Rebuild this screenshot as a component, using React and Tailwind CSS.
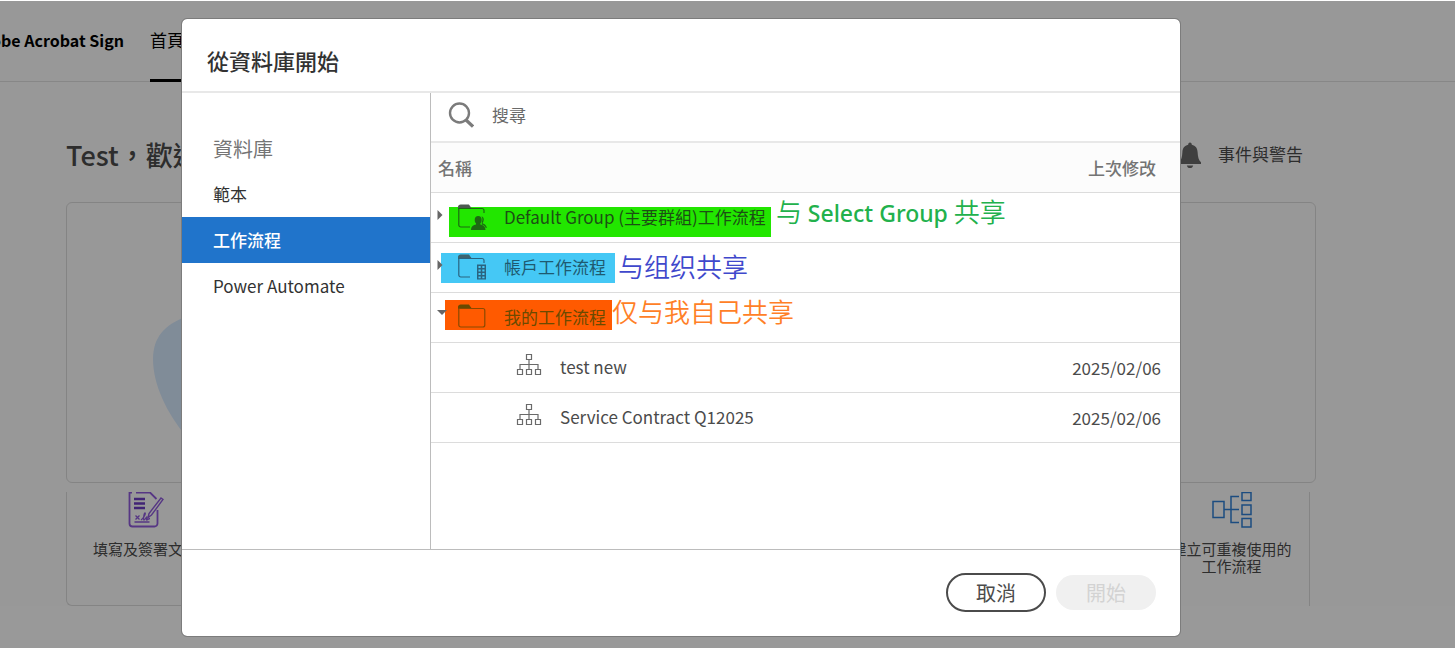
import React from "react";

const FONT = "font-['Noto_Sans_CJK_TC','Noto_Sans',sans-serif]";

function BellIcon() {
  return (
    <svg width="24" height="28" viewBox="0 0 24 28" fill="#6a6a6a" aria-hidden="true">
      <path d="M12 0.5c1.2 0 1.8 1 1.8 2.2 3.8.8 5.6 3.4 5.8 7.3.3 5 1 8 3.4 10.300V22H1v-1.700C3.400 18 4.100 15 4.400 10c.2-3.900 2-6.500 5.800-7.300C10.200 1.500 10.800.5 12 .5zM8.800 23.500h6.400c-.4 1.600-1.500 2.600-3.200 2.600s-2.800-1-3.200-2.600z" />
    </svg>
  );
}

function SignIcon() {
  return (
    <svg width="36" height="36" viewBox="0 0 36 36" fill="none" stroke="#8f5bdc" strokeWidth="1.800" aria-hidden="true">
      <path d="M3 0.500h-1.500V31.500a3 3 0 0 0 3 3h22a3 3 0 0 0 3-3V18M1.500 0.500H4M8 0.500H22l6.500 6.500" />
      <path d="M6 7h11M6 11.500h11M6 16h11" stroke="#6d3cc4" strokeWidth="2.600" />
      <path d="M33 6l2 1.500L23.500 23l-3.500 2.500 1-4z" strokeWidth="1.400" />
      <path d="M7.500 23.500l4 4M11.500 23.500l-4 4M13 28c3-2 5-7 4-7s-2 7-1 7 3-4 3-3-1 3 0 3 1.500-1.500 3-1.500M6.500 30h15" strokeWidth="1.300" />
    </svg>
  );
}

function WorkflowIcon() {
  return (
    <svg width="40" height="36" viewBox="0 0 40 36" fill="none" stroke="#2f7fd6" strokeWidth="1.500" aria-hidden="true">
      <path d="M1 9.500h11v16H1zM30 0.500h9v8h-9zM30 13h9v9.500h-9zM30 26.500h9V35h-9zM12 17.500h15M27 4.500h-8v26h8" />
    </svg>
  );
}

function Folder({ kind, color, tab }) {
  return (
    <svg className="block" width="30" height="28" viewBox="0 0 30 28" fill="none" stroke={color} strokeWidth="1.200" aria-hidden="true">
      <path d="M.6 4.500V3A2 2 0 0 1 2.600 1h8l2.400 3.500z" fill={tab} stroke={tab} />
      {kind === "mine" && <path d="M.8 4.500h24a2 2 0 0 1 2 2v14.500a2 2 0 0 1-2 2h-22a2 2 0 0 1-2-2z" />}
      {kind !== "mine" && <path d="M26 9V6.500a2 2 0 0 0-2-2H.8V21a2 2 0 0 0 2 2H12" />}
      {kind === "group" && (
        <g stroke="none" fill={color}>
          <path d="M20.200 12c2.200 0 3.500 1.700 3.500 3.900 0 1.400-.6 2.700-1.300 3.400v1.200c2.600.7 4.900 1.600 5.100 5.500H13c.2-3.900 2.400-4.800 5-5.500v-1.200c-.8-.7-1.300-2-1.300-3.400 0-2.200 1.300-3.900 3.500-3.900z" />
          <path d="M23.500 12.500c1.500.2 2.300 1.500 2.300 3.100 0 1.200-.4 2.200-1 2.900v1c2 .6 3.700 1.600 4 4.600h-1c-.7-2.200-2.200-3.100-4-3.700v-2.500c.8-1.500.9-3.800-.3-5.400z" />
        </g>
      )}
      {kind === "account" && (
        <g>
          <path d="M19 10.500h9v15h-9z" fill={color} stroke="none" />
          <path d="M20.500 13h2.200M24.300 13h2.200M20.500 16.500h2.200M24.300 16.500h2.200M20.500 20h2.200M24.300 20h2.200M20.500 23.300h2.200M24.300 23.300h2.200" strokeWidth="1.800" stroke="#45c8f5" />
        </g>
      )}
    </svg>
  );
}

function NodeIcon() {
  return (
    <svg className="block" width="26" height="24" viewBox="0 0 26 24" fill="none" stroke="#6a6a6a" strokeWidth="1.200" aria-hidden="true">
      <path d="M10.500 1.500h5v5h-5zM1.500 16.500h5v5h-5zM10.500 16.500h5v5h-5zM19.500 16.500h5v5h-5zM13 6.500v10M4 16.500v-5h18v5" />
    </svg>
  );
}

function Caret({ open }) {
  return (
    <svg width="10" height="10" viewBox="0 0 10 10" fill="#666" aria-hidden="true">
      <path d={open ? "M0 0h10L5 5z" : "M0.500 0v10l5-5z"} />
    </svg>
  );
}

const groups = [
  { kind: "group", label: "Default Group (主要群組)工作流程", text: "text-[#1c4f14]", color: "#1d6a12", tab: "#4d5a50",
    mark: "left-[18px] top-[14px] w-[322px] bg-[#22e600]", note: "left-[345px] top-0 text-[#22b14c]",
    noteText: <>与 <span className="font-['Noto_Sans',sans-serif] text-[23px] font-medium">Select Group</span> 共享</> },
  { kind: "account", label: "帳戶工作流程", text: "text-[#1f5a70]", color: "#2b6480", tab: "#3c6470",
    mark: "left-[10px] top-[10px] w-[174px] bg-[#45c8f5]", note: "left-[187px] top-[5px] text-[#3f48cc]",
    noteText: "与组织共享" },
  { kind: "mine", label: "我的工作流程", text: "text-[#6b4a00]", color: "#8a4a00", tab: "#6b4a00", open: true,
    mark: "left-[14px] top-[7px] w-[167px] bg-[#ff5a00]", note: "left-[181px] top-0 text-[#ff7f27]",
    noteText: "仅与我自己共享" },
];

const files = [
  { name: "test new", date: "2025/02/06" },
  { name: "Service Contract Q12025", date: "2025/02/06" },
];

function Page() {
  return (
    <div className="min-h-screen bg-white pt-px">
      <div className="bg-[#fefefe]">
        <header className="flex h-[81px] border-b border-[#e1e1e1]">
          <div className="flex w-[124px] justify-end overflow-hidden">
            <span className="pt-[26px] text-[16px] leading-[26px] font-bold whitespace-nowrap text-black">Adobe Acrobat Sign</span>
          </div>
          <nav className="ml-[26px]">
            <a href="#home" className="block h-[81px] border-b-[3px] border-black pt-[26px] text-[17px] leading-[26px] text-black">首頁</a>
          </nav>
        </header>
        <main className="mr-[139px] ml-[66px]">
          <div className="flex items-start justify-between pt-[51px] pr-[13px]">
            <h1 className="pb-[25px] text-[27px] leading-[44px] font-medium text-[#4b4b4b]">Test，歡迎使用</h1>
            <a href="#alerts" className="flex items-center gap-4 pt-[8px] text-[17px] leading-[26px] text-[#4b4b4b]">
              <BellIcon />
              <span className="pb-[4px]">事件與警告</span>
            </a>
          </div>
          <section className="rounded-md border border-[#dcdcdc] pt-[110px] pb-[47px] pl-[86px]">
            <svg width="150" height="122" viewBox="0 0 150 122" className="block" aria-hidden="true">
              <path d="M32 4C12 12 0 24 0 46c0 26 14 54 32 76h90V4z" fill="#d6e9fd" />
            </svg>
          </section>
          <div className="mt-[9px] mr-[6px] flex h-[114px] justify-between">
            <a href="#fill" className="flex w-[158px] flex-col items-center rounded-bl-md border-b border-l border-[#dcdcdc] text-[15px] leading-[17px] text-[#4b4b4b]">
              <SignIcon />
              <span className="pt-[12px] whitespace-nowrap">填寫及簽署文件</span>
            </a>
            <a href="#create" className="flex w-[156px] flex-col items-center border-r border-[#dcdcdc] text-center text-[15px] leading-[17px] text-[#4b4b4b]">
              <WorkflowIcon />
              <span className="pt-[12px]">建立可重複使用的<br />工作流程</span>
            </a>
          </div>
        </main>
      </div>
    </div>
  );
}

function Dialog() {
  return (
    <div role="dialog" aria-labelledby="dialog-title" className="w-full overflow-hidden rounded-[5px] bg-white text-[#4b4b4b] outline outline-[#7c7c7c]">
      <div className="border-b-2 border-[#e8e8e8] px-[25px] pt-[25px] pb-[15px]">
        <h2 id="dialog-title" className="text-[22px] leading-[32px] font-medium text-[#323232]">從資料庫開始</h2>
      </div>
      <div className="flex border-b border-[#bcbcbc]">
        <nav className="flex w-[249px] shrink-0 flex-col border-r border-[#bcbcbc] pt-[34px] text-[17px] text-[#323232]">
          <h3 className="pl-[31px] text-[20px] leading-[44px] text-[#747474]">資料庫</h3>
          <button className="h-[46px] pl-[31px] text-left">範本</button>
          <button className="h-[46px] bg-[#2074cb] pl-[31px] text-left font-medium text-white">工作流程</button>
          <button className="h-[46px] pl-[31px] text-left">Power Automate</button>
        </nav>
        <div className="min-w-0 flex-1 pb-[106px]">
          <label className="flex h-[50px] items-center gap-[18px] border-b-2 border-[#e8e8e8] pb-[4px] pl-[17px]">
            <svg width="26" height="26" viewBox="0 0 26 26" fill="none" stroke="#7b7b7b" aria-hidden="true">
              <circle cx="11.500" cy="11" r="9.500" strokeWidth="2.400" />
              <path d="M18 18l7 6.500" strokeWidth="3.200" />
            </svg>
            <input type="search" aria-label="搜尋" placeholder="搜尋" className="min-w-0 flex-1 text-[17px] outline-none placeholder:text-[#6a6a6a] placeholder:opacity-100" />
          </label>
          <table className="w-full border-separate border-spacing-0 text-[17px] leading-[26px]">
            <thead>
              <tr className="bg-[#fcfcfc] text-[#747474]">
                <th scope="col" className="h-[50px] border-b border-[#dcdcdc] p-0 pl-[7px] text-left font-medium">名稱</th>
                <th scope="col" className="h-[50px] border-b border-[#dcdcdc] p-0 pr-[24px] text-right font-medium">上次修改</th>
              </tr>
            </thead>
            <tbody>
              {groups.map((g) => (
                <tr key={g.kind}>
                  <td colSpan={2} className="relative h-[50px] border-b border-[#dcdcdc] p-0">
                    <span className={`absolute h-[30px] ${g.mark}`} />
                    <span lang="zh-CN" className={`absolute font-['Noto_Sans_CJK_SC',sans-serif] text-[26px] leading-[36px] font-[350] whitespace-nowrap ${g.note}`}>{g.noteText}</span>
                    <div className={`relative flex items-center ${g.text}`}>
                      <button aria-label={g.label} className="flex w-[27px] justify-start pb-[6px] pl-[6px]"><Caret open={g.open} /></button>
                      <Folder kind={g.kind} color={g.color} tab={g.tab} />
                      <span className="pb-[2px] pl-[16px] whitespace-nowrap">{g.label}</span>
                    </div>
                  </td>
                </tr>
              ))}
              {files.map((f) => (
                <tr key={f.name}>
                  <td className="h-[50px] border-b border-[#dcdcdc] p-0">
                    <div className="flex items-center gap-[18px] pl-[85px]">
                      <span className="pb-[6px]"><NodeIcon /></span>
                      <span className="pb-[2px]">{f.name}</span>
                    </div>
                  </td>
                  <td className="h-[50px] border-b border-[#dcdcdc] p-0 pr-[19px] text-right">{f.date}</td>
                </tr>
              ))}
            </tbody>
          </table>
        </div>
      </div>
      <div className="flex items-center justify-end gap-[10px] pt-[23px] pr-[24px] pb-[24px] text-[20px]">
        <button className="h-[39px] w-[100px] rounded-full border-2 border-[#4b4b4b] text-[#4b4b4b]">取消</button>
        <button disabled className="h-[35px] w-[100px] rounded-full bg-[#f0f0f0] text-[#d3d3d3]">開始</button>
      </div>
    </div>
  );
}

export default function App() {
  return (
    <div className={`relative overflow-hidden ${FONT}`}>
      <Page />
      <div className="absolute inset-x-0 top-px bottom-0 bg-black/40 pt-[18px] pr-[275px] pl-[182px]">
        <Dialog />
      </div>
    </div>
  );
}
